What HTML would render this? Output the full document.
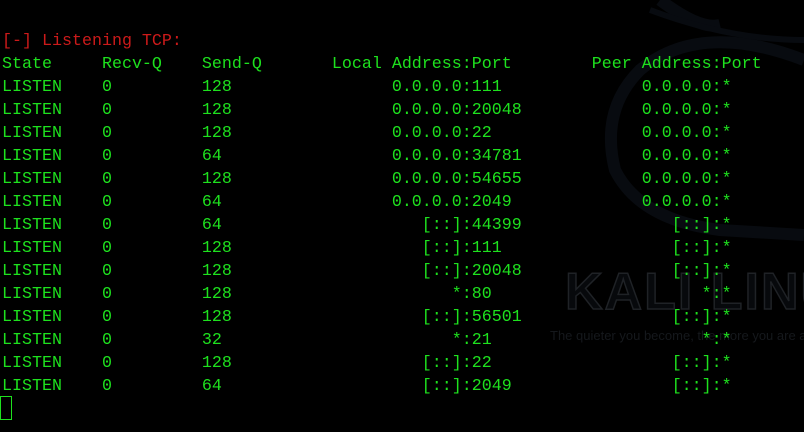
<!DOCTYPE html>
<html><head><meta charset="utf-8"><style>
html,body{margin:0;padding:0;background:#000;width:804px;height:432px;overflow:hidden;position:relative}
svg.bg{position:absolute;left:0;top:0}
pre{position:absolute;left:2px;top:30px;margin:0;font-family:"Liberation Mono","DejaVu Sans Mono",monospace;font-size:16.67px;line-height:23px;color:#1ee11e;white-space:pre}
.r{color:#cc1a1a}
.cur{position:absolute;left:0;top:396px;width:10px;height:22px;border:1px solid #1ee11e}
.tagw{position:absolute;left:550px;top:328px;width:254px;height:20px;overflow:hidden}
.tag{font-family:"Liberation Sans",sans-serif;font-size:13px;color:#15181c;white-space:nowrap}
</style></head><body>
<svg class="bg" width="804" height="432">
<path d="M660 0 Q700 30 720 25 M804 60 Q700 20 640 70 Q600 110 615 170 Q640 220 720 230 L804 235" stroke="#080b10" stroke-width="12" fill="none"/>
<path d="M650 10 Q730 40 804 40" stroke="#080b10" stroke-width="6" fill="none"/>
<text x="565" y="309" font-family="Liberation Sans,sans-serif" font-weight="bold" font-size="52" fill="#07090c" stroke="#1f2226" stroke-width="1.5" letter-spacing="2">KALI LINUX</text>
</svg>
<div class="tagw"><div class="tag">The quieter you become, the more you are able to hear</div></div>
<pre><span class="r">[-] Listening TCP:</span>
State     Recv-Q    Send-Q       Local Address:Port        Peer Address:Port
LISTEN    0         128                0.0.0.0:111              0.0.0.0:*
LISTEN    0         128                0.0.0.0:20048            0.0.0.0:*
LISTEN    0         128                0.0.0.0:22               0.0.0.0:*
LISTEN    0         64                 0.0.0.0:34781            0.0.0.0:*
LISTEN    0         128                0.0.0.0:54655            0.0.0.0:*
LISTEN    0         64                 0.0.0.0:2049             0.0.0.0:*
LISTEN    0         64                    [::]:44399               [::]:*
LISTEN    0         128                   [::]:111                 [::]:*
LISTEN    0         128                   [::]:20048               [::]:*
LISTEN    0         128                      *:80                     *:*
LISTEN    0         128                   [::]:56501               [::]:*
LISTEN    0         32                       *:21                     *:*
LISTEN    0         128                   [::]:22                  [::]:*
LISTEN    0         64                    [::]:2049                [::]:*</pre>
<div class="cur"></div>
</body></html>
